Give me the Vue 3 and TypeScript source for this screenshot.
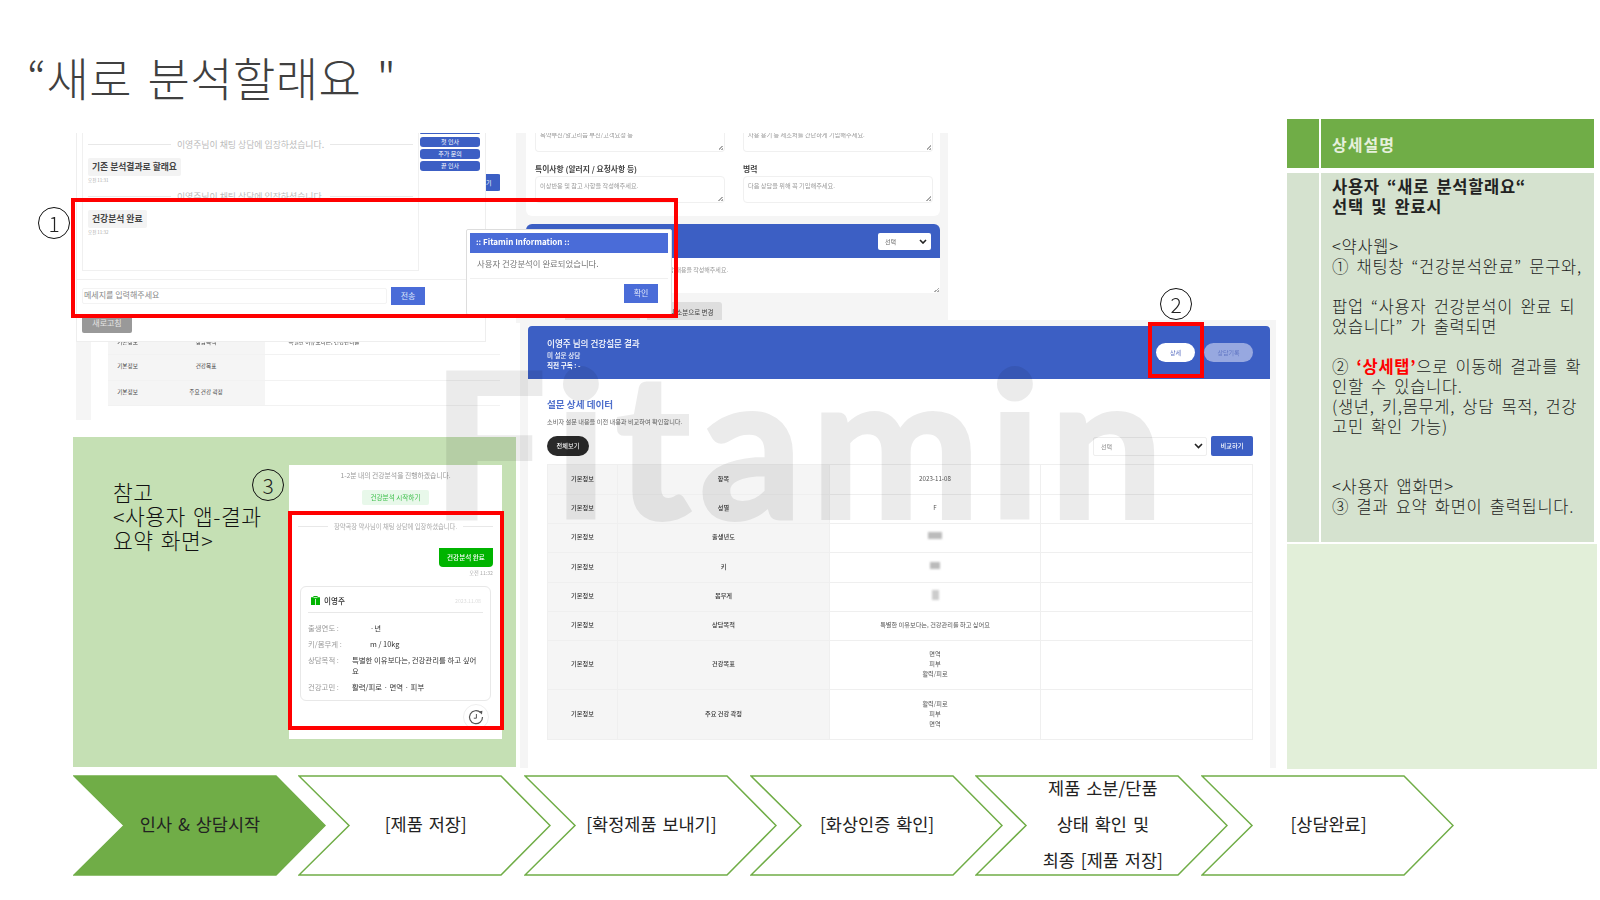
<script setup lang="ts">
interface SurveyRow {
  label: string
  values: string[]
  height: number
  masked?: string
}

const surveyRows: SurveyRow[] = [
  { label: '항목', values: ['2023-11-08'], height: 30 },
  { label: '성별', values: ['F'], height: 29 },
  { label: '출생년도', values: [], height: 29, masked: 'wide' },
  { label: '키', values: [], height: 30, masked: 'mid' },
  { label: '몸무게', values: [], height: 29, masked: 'small' },
  { label: '상담목적', values: ['특별한 이유보다는, 건강관리를 하고 싶어요'], height: 29 },
  { label: '건강목표', values: ['면역', '피부', '활력/피로'], height: 49 },
  { label: '주요 건강 곽정', values: ['활력/피로', '피부', '면역'], height: 50 },
]

const steps: { lines: string[]; active?: boolean }[] = [
  { lines: ['인사 & 상담시작'], active: true },
  { lines: ['[제품 저장]'] },
  { lines: ['[확정제품 보내기]'] },
  { lines: ['[화상인증 확인]'] },
  { lines: ['제품 소분/단품', '상태 확인 및', '최종 [제품 저장]'] },
  { lines: ['[상담완료]'] },
]
</script>

<template>
  <div class="slide">
    <h1 class="title">“새로 분석할래요 "</h1>

    <!-- 뒤쪽 상담 폼 캡처 -->
    <section class="shot form-shot">
      <div class="form-card">
        <div class="form-cols cut">
          <div class="area">복약부진/알고리듬 부진/고객요청 등<i class="grip"></i></div>
          <div class="area">사용 용기 등 제조처를 간단하게 기입해주세요.<i class="grip"></i></div>
        </div>
        <div class="form-cols labels">
          <b>특이사항 (알러지 / 요청사항 등)</b>
          <b>병력</b>
        </div>
        <div class="form-cols">
          <div class="area tall">이상반응 및 참고 사항을 작성해주세요.<i class="grip"></i></div>
          <div class="area tall">다음 상담을 위해 꼭 기입해주세요.<i class="grip"></i></div>
        </div>
      </div>
      <div class="form-bar">
        <span class="mini-select">선택<svg width="8" height="5" viewBox="0 0 8 5"><path d="M1 1l3 3 3-3" fill="none" stroke="#222" stroke-width="1.6" /></svg></span>
      </div>
      <div class="form-note">상담 내용을 작성해주세요.<i class="grip"></i></div>
      <div class="form-actions">
        <span class="action-text">보관 건 상태</span>
        <span class="action">상담 내용 및 기록 저장</span>
        <span class="action">기타 및 소분으로 변경</span>
      </div>
    </section>

    <!-- 채팅 캡처 -->
    <section class="shot chat-shot">
      <div class="chat-modal">
        <div class="chat-top">
          <div class="chat-log">
            <div class="sys"><span>이영주님이 채팅 상담에 입장하셨습니다.</span></div>
            <div class="bubble">기존 분석결과로 할래요</div>
            <div class="stamp">오전 11:31</div>
            <div class="sys second"><span>이영주님이 채팅 상담에 입장하셨습니다.</span></div>
            <div class="bubble">건강분석 완료</div>
            <div class="stamp">오전 11:32</div>
          </div>
          <div class="quick">
            <span class="sliver"></span>
            <span>첫 인사</span>
            <span>추가 문의</span>
            <span>끝 인사</span>
          </div>
        </div>
        <div class="chat-input">
          <div class="field">메세지를 입력해주세요</div>
          <span class="send">전송</span>
        </div>
        <span class="reload">새로고침</span>
      </div>
      <span class="peek">기</span>
      <div class="under-table">
        <div class="under-row cut-row"><span>기본정보</span><span>상담목적</span><span>특별한 이유보다는, 건강관리를</span><span></span></div>
        <div class="under-row"><span>기본정보</span><span>건강목표</span><span></span><span></span></div>
        <div class="under-row"><span>기본정보</span><span>주요 건강 곽정</span><span></span><span></span></div>
      </div>
    </section>

    <section class="shot popup">
      <div class="popup-head">:: Fitamin Information ::</div>
      <div class="popup-body">사용자 건강분석이 완료되었습니다.</div>
      <div class="popup-foot"><span>확인</span></div>
    </section>

    <!-- 설문 결과 캡처 -->
    <section class="shot result">
      <div class="result-card">
        <header class="result-head">
          <div>
            <div class="result-name">이영주 님의 건강설문 결과</div>
            <div class="result-sub">미 설문 상담</div>
            <div class="result-sub strong">직전 구독 : -</div>
          </div>
          <div class="tabs">
            <span class="tab on">상세</span>
            <span class="tab">상담기록</span>
          </div>
        </header>
        <div class="result-body">
          <h2>설문 상세 데이터</h2>
          <p>소비자 설문 내용을 이전 내용과 비교하여 확인합니다.</p>
          <div class="tools">
            <span class="all">전체보기</span>
            <span class="tool-select">선택<svg width="9" height="6" viewBox="0 0 9 6"><path d="M1 1l3.5 3.5L8 1" fill="none" stroke="#222" stroke-width="1.6" /></svg></span>
            <span class="compare">비교하기</span>
          </div>
          <table class="survey">
            <colgroup>
              <col style="width: 70px" />
              <col style="width: 212px" />
              <col style="width: 211px" />
              <col />
            </colgroup>
            <tbody>
              <tr v-for="row in surveyRows" :key="row.label" :style="{ height: row.height + 'px' }">
                <th>기본정보</th>
                <th>{{ row.label }}</th>
                <td>
                  <span v-if="row.masked" class="mask" :class="row.masked"></span>
                  <div v-for="v in row.values" :key="v">{{ v }}</div>
                </td>
                <td></td>
              </tr>
            </tbody>
          </table>
        </div>
      </div>
    </section>

    <!-- 참고: 앱 화면 -->
    <section class="note">
      <p>참고<br />&lt;사용자 앱-결과<br />요약 화면&gt;</p>
    </section>

    <section class="shot phone">
      <div class="phone-msg">1-2분 내의 건강분석을 진행하겠습니다.</div>
      <div class="start">건강분석 시작하기</div>
      <div class="sys phone-sys"><span>장약곡장 약사님이 채팅 상담에 입장하셨습니다.</span></div>
      <div class="green-bubble">건강분석 완료</div>
      <div class="green-time">오전 11:32</div>
      <div class="summary">
        <div class="summary-head">
          <svg width="9" height="9" viewBox="0 0 9 9"><path d="M0 1.2h2.4V0h4.2v1.2H9V9H0z" fill="#00b400" /><path d="M2.6 1.6h3.8M4.5 3v6" stroke="#dff5df" stroke-width=".9" /></svg>
          <b>이영주</b>
          <span>2023.11.08</span>
        </div>
        <div class="summary-rows">
          <div class="s-row"><label>출생연도 :</label><span class="pad">·년</span></div>
          <div class="s-row"><label>키/몸무게 :</label><span class="pad">m / 10kg</span></div>
          <div class="s-row"><label>상담목적 :</label><span>특별한 이유보다는, 건강관리를 하고 싶어요</span></div>
          <div class="s-row"><label>건강고민 :</label><span>활력/피로 · 면역 · 피부</span></div>
        </div>
      </div>
      <div class="redo">
        <svg width="26" height="26" viewBox="0 0 26 26">
          <circle cx="13" cy="13" r="12.5" fill="#fff" stroke="#eee" />
          <path d="M17.6 8.6A6.5 6.5 0 1 0 19.5 13" fill="none" stroke="#555" stroke-width="1.2" />
          <path d="M15.8 7.6l3.6-.8-.5 3.8z" fill="#555" />
          <path d="M13.4 10v4.2h-2.6" fill="none" stroke="#555" stroke-width="1" />
        </svg>
      </div>
    </section>

    <div class="watermark" aria-hidden="true">Fitamin</div>

    <div class="red one"></div>
    <div class="red two"></div>
    <div class="red three"></div>
    <span class="num n1">1</span>
    <span class="num n2">2</span>
    <span class="num n3">3</span>

    <!-- 상세설명 -->
    <aside class="detail">
      <div class="d-head-side"></div>
      <div class="d-head">상세설명</div>
      <div class="d-side"></div>
      <div class="d-body">
        <strong class="tight">사용자 “새로 분석할래요“<br />선택 및 완료시</strong>
        <br /><br />
        &lt;약사웹&gt;<br />
        ① 채팅창 “건강분석완료” 문구와,<br />
        <br />
        팝업 “사용자 건강분석이 완료 되<br />
        었습니다” 가 출력되면<br />
        <br />
        ② <b class="hot">‘상세탭’</b>으로 이동해 결과를 확<br />
        인할 수 있습니다.<br />
        (생년, 키,몸무게, 상담 목적, 건강<br />
        고민 확인 가능)<br />
        <br /><br />
        &lt;사용자 앱화면&gt;<br />
        ③ 결과 요약 화면이 출력됩니다.
      </div>
      <div class="d-foot"></div>
    </aside>

    <!-- 진행 단계 -->
    <nav class="steps">
      <div v-for="step in steps" :key="step.lines[0]" class="step">
        <svg class="arrow" width="253" height="101" viewBox="0 0 253 101">
          <polygon
            points="1,1 203,1 252,50.5 203,100 1,100 51,50.5"
            :fill="step.active ? '#70ad47' : '#fff'"
            stroke="#70ad47"
            stroke-width="1.5"
          />
        </svg>
        <div class="step-label">
          <div v-for="line in step.lines" :key="line">{{ line }}</div>
        </div>
      </div>
    </nav>
  </div>
</template>

<style scoped>
.slide {
  position: relative;
  width: 1600px;
  height: 900px;
  overflow: hidden;
  background: #fff;
  font-family: "Noto Sans CJK KR", "Noto Sans", sans-serif;
  color: #222;
}
.title {
  position: absolute;
  left: 27px;
  top: 44px;
  margin: 0;
  font-size: 46px;
  line-height: 64px;
  font-weight: 300;
  color: #404040;
  word-spacing: 5px;
  letter-spacing: 0.4px;
  white-space: pre;
}
.shot {
  position: absolute;
  filter: blur(0.45px);
  overflow: hidden;
}

/* form capture */
.form-shot {
  left: 516px;
  top: 133px;
  width: 432px;
  height: 190px;
  background: #f5f5f5;
  padding-left: 10px;
  box-sizing: border-box;
}
.form-card {
  width: 414px;
  height: 83px;
  background: #fff;
  border-radius: 0 0 6px 6px;
  padding: 0 9px;
  box-sizing: border-box;
}
.form-cols {
  display: grid;
  grid-template-columns: 190px 190px;
  gap: 18px;
  font-size: 7px;
}
.form-cols.labels {
  height: 24px;
  padding-top: 8px;
  box-sizing: border-box;
  align-items: center;
  font-size: 7.8px;
  color: #444;
}
.area {
  position: relative;
  height: 19px;
  border: 1px solid #f0f0f0;
  border-top: 0;
  border-radius: 0 0 4px 4px;
  padding: 0 4px;
  line-height: 3px;
  font-size: 6.2px;
  color: #999;
  box-sizing: border-box;
}
.area.tall {
  height: 27px;
  border-top: 1px solid #f0f0f0;
  border-radius: 4px;
  line-height: 17px;
}
.grip {
  position: absolute;
  right: 1px;
  bottom: 1px;
  width: 5px;
  height: 5px;
  background: linear-gradient(135deg, transparent 50%, #aaa 50%, #aaa 65%, transparent 65%, transparent 78%, #aaa 78%);
}
.form-bar {
  display: flex;
  justify-content: flex-end;
  align-items: center;
  width: 414px;
  height: 34px;
  margin-top: 8px;
  padding-right: 9px;
  box-sizing: border-box;
  background: #3c5fc4;
  border-radius: 6px 6px 0 0;
}
.mini-select {
  display: flex;
  align-items: center;
  justify-content: space-between;
  width: 53px;
  height: 17px;
  padding: 0 4px 0 7px;
  box-sizing: border-box;
  background: #fff;
  border-radius: 2px;
  font-size: 6px;
  color: #666;
}
.form-note {
  position: relative;
  width: 414px;
  height: 35px;
  padding-left: 137px;
  box-sizing: border-box;
  background: #fff;
  border-radius: 0 0 6px 6px;
  font-size: 6px;
  line-height: 23px;
  color: #999;
}
.form-actions {
  display: flex;
  gap: 7px;
  align-items: center;
  margin-top: 9px;
  font-size: 6.5px;
  color: #444;
}
.action-text {
  width: 32px;
  white-space: nowrap;
}
.action {
  width: 75px;
  height: 20px;
  line-height: 20px;
  text-align: center;
  background: #dedede;
  border-radius: 3px;
}

/* chat capture */
.chat-shot {
  left: 76px;
  top: 133px;
  width: 424px;
  height: 287px;
  background: linear-gradient(to right, #f5f5f5 15px, transparent 15px);
}
.chat-modal {
  position: relative;
  width: 410px;
  height: 209px;
  background: #fff;
  border: 1px solid #eee;
  border-top: 0;
  box-sizing: border-box;
  padding: 0 5px;
}
.chat-top {
  display: flex;
  gap: 1px;
  height: 138px;
}
.chat-log {
  width: 337px;
  box-sizing: border-box;
  border: 1px solid #f0f0f0;
  border-top: 0;
  padding: 5px 5px 0;
}
.sys {
  display: flex;
  align-items: center;
  gap: 6px;
  height: 13px;
  font-size: 8.9px;
  color: #bbb;
  white-space: nowrap;
}
.sys::before,
.sys::after {
  content: "";
  flex: 1;
  height: 1px;
  background: #e8e8e8;
}
.sys.second {
  margin-top: 6px;
}
.bubble {
  width: fit-content;
  margin-top: 7px;
  padding: 0 4px;
  height: 18px;
  line-height: 17px;
  background: #f3f3f3;
  border-radius: 2px;
  font-size: 8.8px;
  font-weight: 700;
  color: #444;
}
.stamp {
  font-size: 4.5px;
  line-height: 8px;
  color: #aaa;
}
.quick {
  display: flex;
  flex-direction: column;
  gap: 2.5px;
  width: 60px;
  margin-top: -1px;
  font-size: 6px;
  line-height: 9.5px;
  text-align: center;
  color: #fff;
}
.quick span {
  background: #3c5fc4;
  border-radius: 3px;
}
.quick .sliver {
  height: 1.5px;
  margin-bottom: 1px;
}
.chat-input {
  display: flex;
  align-items: center;
  gap: 4px;
  margin: 8px -5px 0;
  padding: 7px 5px 0;
  border-top: 1px solid #f0f0f0;
}
.field {
  width: 305px;
  height: 16px;
  line-height: 12px;
  font-size: 8px;
  color: #888;
  border: 1px solid #f3f3f3;
  border-radius: 2px;
  box-sizing: border-box;
  padding-left: 1px;
}
.send {
  width: 34px;
  height: 18px;
  line-height: 18px;
  text-align: center;
  font-size: 8px;
  color: #dfe6fa;
  background: #4a6cd8;
}
.reload {
  display: block;
  width: 50px;
  height: 19px;
  line-height: 18px;
  margin-top: 9px;
  text-align: center;
  font-size: 8px;
  color: #e5e5e5;
  background: #999;
  border-radius: 2px;
}
.peek {
  position: absolute;
  left: 410px;
  top: 41px;
  width: 15px;
  height: 17px;
  line-height: 17px;
  font-size: 6px;
  color: #fff;
  background: #3c5fc4;
  border-radius: 0 3px 3px 0;
}
.under-table {
  margin-left: 32px;
}
.under-row {
  display: grid;
  grid-template-columns: 39px 118px 118px 117px;
  height: 25.5px;
  border-bottom: 1px solid #f2f2f2;
  box-sizing: border-box;
  font-size: 5.6px;
  line-height: 22px;
  text-align: center;
  color: #444;
  overflow: hidden;
}
.under-row.cut-row {
  height: 13px;
  line-height: 0;
}
.under-row span:nth-child(-n + 2) {
  background: #f5f5f5;
}

/* popup */
.popup {
  left: 466px;
  top: 229px;
  width: 206px;
  height: 86px;
  padding: 3px;
  box-sizing: border-box;
  background: #fff;
  border: 1px solid #ddd;
  border-radius: 2px;
}
.popup-head {
  height: 20px;
  line-height: 18px;
  padding-left: 6px;
  background: #4a6cd8;
  color: #fff;
  font-size: 8px;
  font-weight: 700;
}
.popup-body {
  height: 25px;
  line-height: 20px;
  padding-left: 7px;
  font-size: 8.4px;
  color: #777;
  border-bottom: 1px solid #f0f0f0;
}
.popup-foot {
  display: flex;
  justify-content: flex-end;
  padding: 5px 10px 0 0;
}
.popup-foot span {
  width: 34px;
  height: 19px;
  line-height: 18px;
  text-align: center;
  font-size: 8px;
  color: #dfe6fa;
  background: #4a6cd8;
}

/* result capture */
.result {
  left: 520px;
  top: 320px;
  width: 756px;
  height: 448px;
  padding: 6px 6px 0 8px;
  box-sizing: border-box;
  background: #f5f5f5;
}
.result-card {
  height: 100%;
  background: #fff;
}
.result-head {
  display: flex;
  justify-content: space-between;
  align-items: center;
  height: 53px;
  padding: 0 17px 0 19px;
  background: #3c5fc4;
  border-radius: 4px 4px 0 0;
  color: #fff;
}
.result-name {
  font-size: 8.6px;
  line-height: 14px;
  font-weight: 500;
}
.result-sub {
  font-size: 6.6px;
  line-height: 10px;
  font-weight: 500;
}
.result-sub.strong {
  font-weight: 700;
}
.tabs {
  display: flex;
  gap: 9px;
}
.tab {
  width: 49px;
  height: 19px;
  line-height: 19px;
  border-radius: 10px;
  text-align: center;
  font-size: 6px;
  color: #6277c4;
  background: #97a8e0;
}
.tab.on {
  width: 39px;
  color: #5a6fc2;
  background: #fff;
}
.result-body {
  padding: 0 17px 0 19px;
}
.result-body h2 {
  margin: 17px 0 0;
  font-size: 9.6px;
  line-height: 16px;
  font-weight: 700;
  color: #4f70cc;
}
.result-body p {
  margin: 4px 0 0;
  font-size: 6.2px;
  line-height: 12px;
  color: #666;
}
.tools {
  display: flex;
  align-items: center;
  gap: 4px;
  margin-top: 8px;
}
.all {
  width: 42px;
  height: 20px;
  line-height: 19px;
  text-align: center;
  border-radius: 10px;
  background: #2a2a2a;
  color: #fff;
  font-size: 6.2px;
  font-weight: 500;
  margin-right: auto;
}
.tool-select {
  display: flex;
  align-items: center;
  justify-content: space-between;
  width: 114px;
  height: 19px;
  padding: 0 3px 0 7px;
  box-sizing: border-box;
  border: 1px solid #eee;
  border-radius: 2px;
  background: #fff;
  font-size: 6px;
  color: #888;
}
.compare {
  width: 42px;
  height: 20px;
  line-height: 19px;
  text-align: center;
  background: #3c5fc4;
  color: #fff;
  border-radius: 2px;
  font-size: 6.2px;
  font-weight: 500;
}
.survey {
  width: 706px;
  margin-top: 8px;
  border-collapse: collapse;
  table-layout: fixed;
  font-size: 6.2px;
  line-height: 10px;
  color: #555;
}
.survey th,
.survey td {
  padding: 0 0 2px;
  border: 1px solid #efefef;
  text-align: center;
  font-weight: 400;
}
.survey th {
  background: #f5f5f5;
  font-weight: 500;
  color: #333;
}
.mask {
  display: inline-block;
  height: 7px;
  background: #bbb;
  filter: blur(1.2px);
}
.mask.wide {
  width: 14px;
}
.mask.mid {
  width: 10px;
}
.mask.small {
  width: 7px;
  height: 10px;
  background: #ccc;
}

/* reference panel */
.note {
  position: absolute;
  left: 73px;
  top: 437px;
  width: 443px;
  height: 330px;
  background: #c5e0b4;
}
.note p {
  margin: 43px 0 0 40px;
  font-size: 21.5px;
  line-height: 24px;
  font-weight: 300;
  color: #111;
  word-spacing: 2px;
  letter-spacing: 0.5px;
}
.phone {
  left: 289px;
  top: 465px;
  width: 213px;
  height: 274px;
  background: #fff;
  font-size: 7.4px;
  overflow: visible;
}
.phone-msg {
  padding-top: 5px;
  line-height: 10px;
  text-align: center;
  font-size: 6.8px;
  color: #999;
}
.start {
  width: 67px;
  height: 15px;
  line-height: 15px;
  margin: 10px auto 0;
  text-align: center;
  background: #e8f8ea;
  color: #3cbf4a;
  font-size: 6.6px;
  border-radius: 2px;
}
.sys.phone-sys {
  margin: 16px 9px 0;
  height: 10px;
  font-size: 6.3px;
  color: #aaa;
}
.green-bubble {
  width: 54px;
  height: 19px;
  line-height: 18px;
  margin: 17px 9px 0 auto;
  text-align: center;
  background: #00b400;
  color: #fff;
  border-radius: 0 0 4px 4px;
  font-size: 6.6px;
  font-weight: 500;
}
.green-time {
  margin: 1px 9px 0 0;
  text-align: right;
  line-height: 9px;
  font-size: 5.2px;
  color: #aaa;
}
.summary {
  width: 191px;
  height: 115px;
  margin: 9px 0 0 11px;
  padding: 0 7px;
  box-sizing: border-box;
  border: 1px solid #e8e8e8;
  border-radius: 6px;
}
.summary-head {
  display: flex;
  align-items: center;
  height: 26px;
  padding: 1px 0 0 3px;
  box-sizing: border-box;
  gap: 4px;
  border-bottom: 1px solid #e8e8e8;
}
.summary-head b {
  font-size: 7.6px;
  font-weight: 500;
  color: #333;
}
.summary-head span {
  margin-left: auto;
  margin-right: 2px;
  font-size: 5.2px;
  color: #ddd;
}
.summary-rows {
  display: flex;
  flex-direction: column;
  gap: 5px;
  padding-top: 9px;
}
.s-row {
  display: grid;
  grid-template-columns: 44px 1fr;
  line-height: 11px;
  color: #333;
}
.s-row label {
  color: #999;
}
.s-row .pad {
  padding-left: 18px;
}
.redo {
  position: absolute;
  left: 174px;
  top: 239px;
}

.watermark {
  position: absolute;
  left: 432px;
  top: 290px;
  font-family: Lato, "Noto Sans", sans-serif;
  font-size: 202px;
  line-height: 300px;
  font-weight: 700;
  letter-spacing: 9px;
  color: #000;
  -webkit-text-stroke: 4px #000;
  opacity: 0.08;
  white-space: nowrap;
}
.red {
  position: absolute;
  border: 4px solid #f00;
  box-sizing: border-box;
}
.red.one {
  left: 71px;
  top: 198px;
  width: 607px;
  height: 120px;
}
.red.two {
  left: 1148px;
  top: 322px;
  width: 56px;
  height: 56px;
}
.red.three {
  left: 288px;
  top: 511px;
  width: 216px;
  height: 219px;
}
.num {
  position: absolute;
  width: 32px;
  height: 32px;
  border: 1px solid #111;
  border-radius: 50%;
  box-sizing: border-box;
  text-align: center;
  font-size: 21px;
  line-height: 30px;
  font-weight: 300;
  color: #222;
  background: transparent;
}
.n1 {
  left: 38px;
  top: 207px;
}
.n2 {
  left: 1160px;
  top: 288px;
}
.n3 {
  left: 252px;
  top: 469px;
}

/* detail table */
.detail {
  position: absolute;
  left: 1287px;
  top: 119px;
  display: grid;
  grid-template-columns: 32px 273px;
  grid-template-rows: 49px 374px 227px;
  column-gap: 2px;
}
.d-head-side,
.d-head {
  background: #70ad47;
}
.d-head {
  padding-left: 11px;
  font-size: 16px;
  line-height: 51px;
  letter-spacing: 1px;
  font-weight: 700;
  color: #e6f0dc;
}
.d-side,
.d-body {
  margin-top: 5px;
  background: #d5e2cf;
}
.d-body {
  height: 369px;
  padding: 3px 0 0 11px;
  box-sizing: border-box;
  font-size: 16.5px;
  line-height: 20px;
  letter-spacing: 0.7px;
  color: #222;
  white-space: nowrap;
  font-weight: 300;
  word-spacing: 3px;
}
.tight {
  font-weight: 700;
}
.hot {
  color: #f00;
  font-weight: 700;
}
.d-foot {
  grid-column: 1 / 3;
  width: 310px;
  margin-top: 2px;
  background: #e2efd9;
}

/* chevrons */
.steps {
  position: absolute;
  left: 72.5px;
  top: 775px;
  display: flex;
}
.step {
  position: relative;
  flex: none;
  width: 253px;
  height: 101px;
  margin-right: -27.3px;
}
.arrow {
  display: block;
}
.step-label {
  position: absolute;
  inset: 0;
  display: flex;
  flex-direction: column;
  justify-content: center;
  align-items: center;
  font-size: 17.5px;
  line-height: 36px;
  padding: 0 0 4px 2px;
  box-sizing: border-box;
  color: #222;
  word-spacing: 2px;
}
</style>

<style>
html,
body {
  margin: 0;
  background: #fff;
}
</style>
